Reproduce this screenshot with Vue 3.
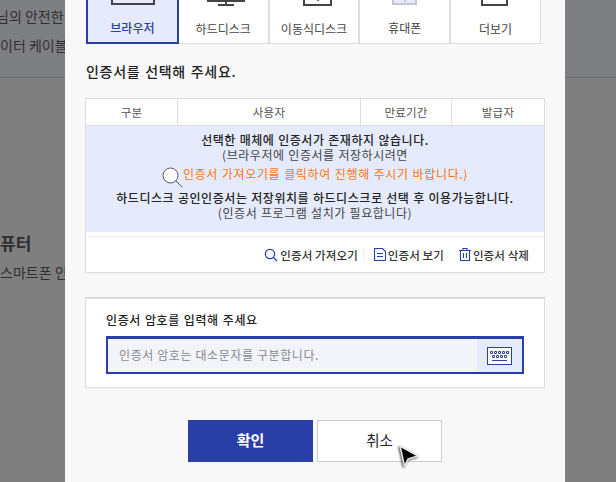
<template>
  <div class="screen">
    <div class="page">
      <div class="page-top">
        <p class="line first">님의 안전한 <span class="dim">금</span></p>
        <p class="line">이터 케이블</p>
      </div>
      <div class="page-sec">
        <h3>퓨터</h3>
        <p class="line">스마트폰 인</p>
      </div>
    </div>

    <div class="modal">
      <ul class="tabs">
        <li v-for="t in tabs" :key="t.name" class="tab" :class="{ on: t.on }">
          <span class="tab-ico" :class="t.ico"></span>
          <span class="tab-name">{{ t.name }}</span>
        </li>
      </ul>

      <h4 class="pick">인증서를 선택해 주세요.</h4>

      <div class="cert">
        <div class="cert-head">
          <span>구분</span>
          <span>사용자</span>
          <span>만료기간</span>
          <span>발급자</span>
        </div>
        <div class="cert-msg">
          <p class="strong">선택한 매체에 인증서가 존재하지 않습니다.</p>
          <p>(브라우저에 인증서를 저장하시려면</p>
          <p class="orange">
            <svg class="lens" width="22" height="22" viewBox="0 0 22 22">
              <circle cx="8.5" cy="8.5" r="7.5" fill="#fff" stroke="#555" stroke-width="1" />
              <path d="M14 14l6.5 6.5" stroke="#555" stroke-width="1" />
            </svg>
            인증서 가져오기를 클릭하여 진행해 주시기 바랍니다.)
          </p>
          <p class="strong second">하드디스크 공인인증서는 저장위치를 하드디스크로 선택 후 이용가능합니다.</p>
          <p>(인증서 프로그램 설치가 필요합니다)</p>
        </div>
        <div class="cert-actions">
          <a>
            <svg width="14" height="14" viewBox="0 0 14 14" fill="none" stroke="#2a3ea8" stroke-width="1.3">
              <circle cx="6" cy="6" r="4.6" />
              <path d="M9.4 9.4l3.6 3.6" />
            </svg>
            인증서 가져오기
          </a>
          <i class="sep"></i>
          <a>
            <svg width="12" height="13" viewBox="0 0 12 13" fill="none" stroke="#2a3ea8" stroke-width="1.1">
              <path d="M0.5 0.5h8l3 3v9h-11z" />
              <path d="M3 5.5h6M3 8.5h6" />
            </svg>
            인증서 보기
          </a>
          <a>
            <svg width="12" height="13" viewBox="0 0 12 13" fill="none" stroke="#2a3ea8" stroke-width="1.1">
              <path d="M0 2.5h12M4 2.5v-2h4v2M1.5 2.5v10h9v-10M4.5 5v5M7.5 5v5" />
            </svg>
            인증서 삭제
          </a>
        </div>
      </div>

      <div class="pw">
        <label class="pw-label">인증서 암호를 입력해 주세요</label>
        <div class="pw-box">
          <span class="pw-hint">인증서 암호는 대소문자를 구분합니다.</span>
          <span class="pw-key">
            <svg width="25" height="18" viewBox="0 0 25 18" fill="none" stroke="#2a3ea8">
              <rect x="0.5" y="0.5" width="24" height="17" fill="#fff" />
              <path d="M3.5 4.5h2v2h-2zM7.5 4.5h2v2h-2zM11.5 4.5h2v2h-2zM15.5 4.5h2v2h-2zM19.5 4.5h2v2h-2zM5.5 8.5h2v2h-2zM9.5 8.5h2v2h-2zM13.5 8.5h2v2h-2zM17.5 8.5h2v2h-2zM5 13.5h15" />
            </svg>
          </span>
        </div>
      </div>

      <div class="btns">
        <button class="btn ok">확인</button>
        <button class="btn cancel">취소</button>
      </div>
    </div>

    <svg class="cursor" width="26" height="28" viewBox="0 0 26 28">
      <path class="cursor-arrow" d="M4 3l4.5 20 3.5-7 10-3z" fill="#000" stroke="#e8e8e8" stroke-width="1.5" stroke-linejoin="round" />
    </svg>
  </div>
</template>

<script setup>
const tabs = [
  { name: '브라우저', ico: 'browser', on: true },
  { name: '하드디스크', ico: 'hdd' },
  { name: '이동식디스크', ico: 'usb' },
  { name: '휴대폰', ico: 'phone' },
  { name: '더보기', ico: 'more' },
];
</script>

<style>
html, body { margin: 0; overflow: hidden; }
</style>

<style scoped>
.screen {
  position: relative;
  width: 616px;
  height: 482px;
  overflow: hidden;
  background: #7f7f7f;
  font-family: "Noto Sans CJK KR", "Liberation Sans", sans-serif;
  color: #222;
}
p, h3, h4, ul { margin: 0; padding: 0; }

/* 뒤쪽 페이지 */
.page { color: #2e2e33; font-size: 14px; }
.page-top { height: 78px; padding-top: 5px; box-sizing: border-box; border-bottom: 1px solid #6a6a74; background: #7e7f83; }
.line { line-height: 20px; margin-top: 9px; white-space: nowrap; }
.line.first { margin-top: 0; margin-left: -4px; padding-top: 1px; }
.dim { color: #6b4a30; }
.page-sec { margin-top: 153px; }
.page-sec h3 { font-size: 17px; line-height: 24px; font-weight: 700; }
.page-sec .line { margin-top: 7px; }

/* 모달 */
.modal {
  position: absolute;
  left: 65px;
  top: 0;
  width: 500px;
  height: 482px;
  box-sizing: border-box;
  background: #f8f8f8;
  padding: 0 20px;
}
.tabs {
  display: flex;
  list-style: none;
  width: 455px;
  height: 44px;
  margin-left: 1px;
  background: #fff;
}
.tab {
  flex: 1;
  position: relative;
  box-sizing: border-box;
  display: flex;
  justify-content: center;
  align-items: flex-end;
  border-right: 2px solid #ddd;
  border-bottom: 1px solid #ddd;
  font-size: 12px;
  color: #444;
  line-height: 16px;
  padding-bottom: 6px;
}
.tab:last-child { border-right: 1px solid #ddd; }
.tab:nth-child(4) { padding-bottom: 7px; }
.tab.on {
  background: #e5ebfc;
  color: #2a3ea8;
  font-weight: 500;
  border: 2px solid #2a3ea8;
  border-top: 0;
  padding-bottom: 6px;
}
.tab-ico { position: absolute; top: 0; box-sizing: border-box; }
.browser { left: 23px; width: 44px; height: 5px; border: 2px solid #444; border-top: 0; }
.hdd { left: 28px; width: 38px; height: 2px; background: #444; }
.hdd::before { content: ""; position: absolute; left: 18px; top: 1px; width: 2px; height: 4px; background: #444; }
.hdd::after { content: ""; position: absolute; left: 11px; top: 4px; width: 16px; height: 2px; background: #444; }
.usb { left: 33px; width: 29px; height: 6px; border: 2px solid #444; border-top: 0; }
.usb::after { content: ""; position: absolute; left: 12px; top: 0; width: 2px; height: 1px; background: #666; }
.phone { left: 32px; width: 25px; height: 5px; background: #e5ebfc; border: 2px solid #c8c8c8; border-top: 0; }
.phone::after { content: ""; position: absolute; left: 10px; top: 0; width: 2px; height: 2px; background: #c8c8c8; }
.more { left: 30px; width: 27px; height: 6px; border: 2px solid #444; border-top: 0; }

.pick { font-size: 14px; font-weight: 500; line-height: 20px; margin: 17px 0 0 1px; color: #222; letter-spacing: .7px; word-spacing: 1px; }

.cert { width: 460px; margin-top: 17px; background: #fff; border: 1px solid #ddd; box-sizing: border-box; height: 175px; }
.cert-head {
  display: grid;
  grid-template-columns: 92px 183px 91px 1fr;
  height: 26px;
  border-bottom: 1px solid #ddd;
  font-size: 11.5px;
  letter-spacing: .2px;
  color: #555;
}
.cert-head span { display: flex; align-items: center; justify-content: center; border-right: 1px solid #ddd; }
.cert-head span:last-child { border-right: 0; }
.cert-msg {
  background: #e5ebfc;
  height: 106px;
  text-align: center;
  font-size: 12px;
  line-height: 15px;
  letter-spacing: .55px;
  word-spacing: .5px;
  color: #444;
  padding-top: 6px;
  box-sizing: border-box;
}
.cert-msg .strong { color: #222; font-weight: 500; }
.cert-msg .orange { position: relative; color: #f57514; margin-top: 3px; line-height: 17px; padding-left: 21px; letter-spacing: .65px; }
.cert-msg .second { margin-top: 8px; }
.lens { position: absolute; left: 76px; top: 2px; }
.cert-actions { display: flex; justify-content: flex-end; align-items: center; height: 35px; margin-top: 4px; border-top: 1px solid #eee; padding-right: 15px; font-size: 11.5px; font-weight: 500; color: #333; letter-spacing: .1px; }
.cert-actions a { display: inline-flex; align-items: center; gap: 2px; margin-left: 15px; }
.cert-actions a:first-child { margin-left: 0; }
.sep { width: 1px; height: 12px; background: #eee; margin-left: 5px; margin-right: -5px; }

.pw { width: 460px; height: 91px; margin-top: 24px; background: #fff; border: 1px solid #ddd; border-top-width: 2px; box-sizing: border-box; padding: 12px 20px 0; }
.pw-label { display: block; font-size: 12px; font-weight: 500; line-height: 18px; color: #222; letter-spacing: .6px; word-spacing: .7px; }
.pw-box { display: flex; align-items: center; justify-content: space-between; height: 38px; margin-top: 7px; border: 2px solid #2a3ea8; border-top-width: 3px; box-sizing: border-box; background: #f3f4f9; width: 418px; }
.pw-hint { font-size: 12px; color: #85888f; padding: 0 0 2px 11px; letter-spacing: .6px; }
.pw-key { display: flex; align-items: center; justify-content: center; width: 45px; height: 100%; background: #e5ebfc; }

.btns { display: flex; justify-content: center; gap: 4px; margin-top: 32px; }
.btn { width: 125px; height: 42px; font: inherit; font-size: 15px; line-height: 38px; padding: 0 0 2px; }
.ok { background: #2a3ea8; border: 0; color: #fff; font-weight: 700; }
.cancel { background: #fff; border: 1px solid #ccc; color: #222; font-weight: 400; font-size: 14.5px; }

.cursor { position: absolute; left: 396px; top: 443px; }
.cursor-arrow { filter: drop-shadow(-1px 1px 1px rgba(0, 0, 0, .7)); }
</style>
